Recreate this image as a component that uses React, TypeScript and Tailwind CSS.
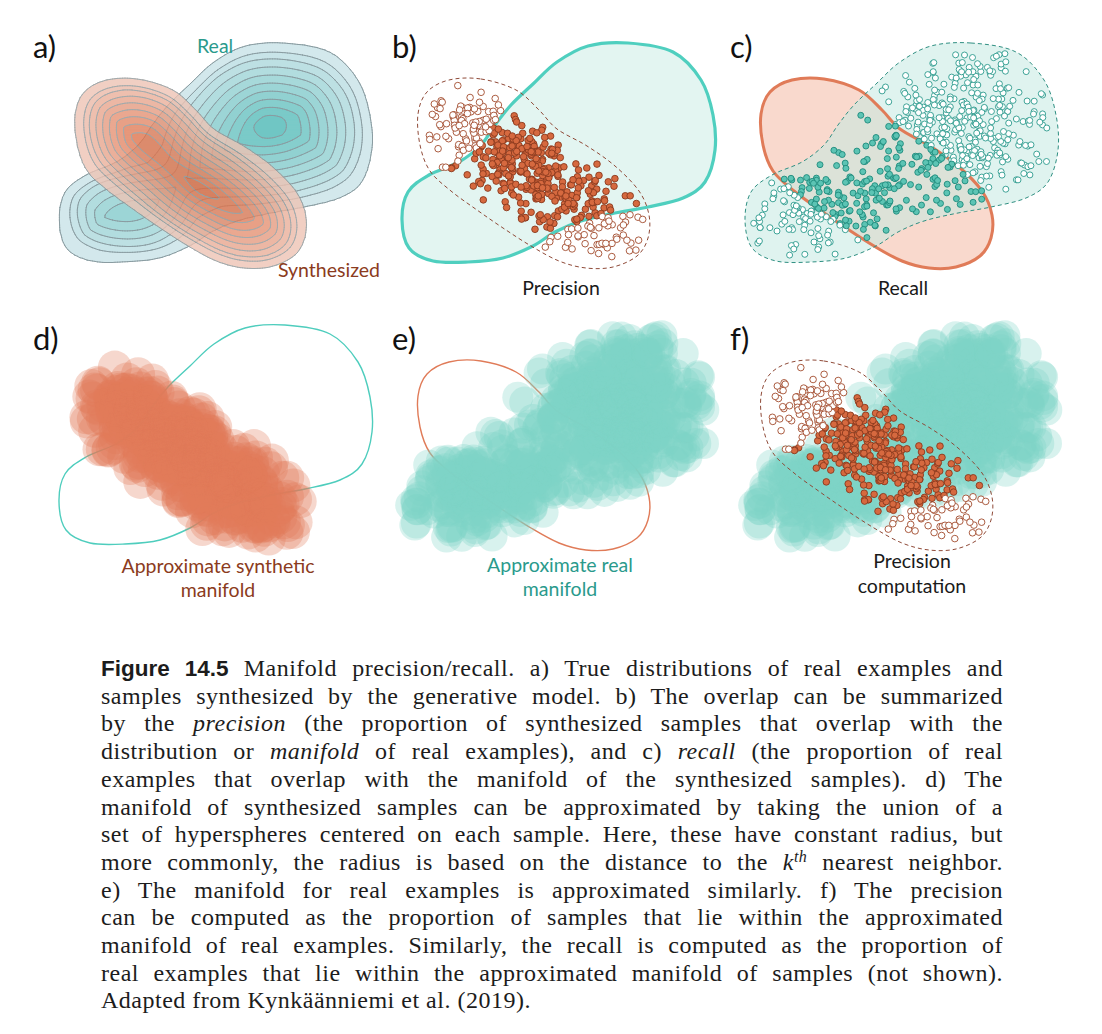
import React from 'react';

type Pt = [number, number];
type Comp = { cx: number; cy: number; sx: number; sy: number; rot: number; w: number };

// grid offsets between the panels (all shapes are defined in panel a coordinates)
const DX = 343;
const DY = 282;

const R_PTS: Pt[] = [
  [285, 43], [330, 52], [358, 80], [370, 115], [372, 150], [362, 182], [340, 198], [305, 207],
  [272, 213], [238, 221], [212, 232], [190, 246], [160, 258], [125, 262], [90, 261], [66, 248],
  [59, 220], [65, 192], [86, 175], [116, 162], [138, 145], [152, 125], [168, 105], [190, 84],
  [214, 62], [245, 46],
];

const S_PTS: Pt[] = [
  [138, 79], [173, 90], [196, 110], [214, 129], [244, 146], [272, 166], [296, 191], [306, 215],
  [305, 238], [294, 256], [270, 267], [243, 268], [216, 261], [188, 246], [160, 228], [134, 210],
  [108, 191], [87, 171], [77, 145], [75, 114], [84, 92], [106, 80],
];

const deg = Math.PI / 180;
const AX = 36 * deg;
const along = (t: number, p = 0): Pt => [190 + t * Math.cos(AX) - p * Math.sin(AX), 175 + t * Math.sin(AX) + p * Math.cos(AX)];

const ORANGE: Comp[] = [
  { cx: along(-60, -4)[0], cy: along(-60, -4)[1], sx: 30, sy: 24, rot: AX, w: 0.9 },
  { cx: along(8, 6)[0], cy: along(8, 6)[1], sx: 32, sy: 24, rot: AX, w: 1.0 },
  { cx: along(64, 4)[0], cy: along(64, 4)[1], sx: 30, sy: 22, rot: AX, w: 0.7 },
];
const TEAL: Comp[] = [
  { cx: 270, cy: 126, sx: 42, sy: 34, rot: 0, w: 1 },
  { cx: 126, cy: 212, sx: 30, sy: 22, rot: 12 * deg, w: 0.5 },
];

// sampling mixtures (w = probability)
const SYNTH_SAMPLER: Comp[] = [
  { cx: along(-62)[0], cy: along(-62)[1], sx: 34, sy: 24, rot: AX, w: 0.34 },
  { cx: along(0)[0], cy: along(0)[1], sx: 34, sy: 24, rot: AX, w: 0.4 },
  { cx: along(62)[0], cy: along(62)[1], sx: 34, sy: 24, rot: AX, w: 0.26 },
];
const REAL_SAMPLER: Comp[] = [
  { cx: 280, cy: 122, sx: 48, sy: 40, rot: 0, w: 0.56 },
  { cx: 118, cy: 214, sx: 38, sy: 27, rot: 12 * deg, w: 0.22 },
  { cx: 200, cy: 185, sx: 50, sy: 26, rot: -15 * deg, w: 0.22 },
];

const f1 = (n: number) => n.toFixed(1);

const mixture = (comps: Comp[]) => (x: number, y: number) => {
  let s = 0;
  for (const c of comps) {
    const dx = x - c.cx;
    const dy = y - c.cy;
    const u = (dx * Math.cos(c.rot) + dy * Math.sin(c.rot)) / c.sx;
    const v = (-dx * Math.sin(c.rot) + dy * Math.cos(c.rot)) / c.sy;
    s += c.w * Math.exp(-0.5 * (u * u + v * v));
  }
  return s;
};

function splinePath(pts: Pt[]): string {
  const n = pts.length;
  let d = `M${pts[0][0]},${pts[0][1]}`;
  for (let i = 0; i < n; i++) {
    const p0 = pts[(i - 1 + n) % n];
    const p1 = pts[i];
    const p2 = pts[(i + 1) % n];
    const p3 = pts[(i + 2) % n];
    const c1x = p1[0] + (p2[0] - p0[0]) / 6;
    const c1y = p1[1] + (p2[1] - p0[1]) / 6;
    const c2x = p2[0] - (p3[0] - p1[0]) / 6;
    const c2y = p2[1] - (p3[1] - p1[1]) / 6;
    d += ` C${f1(c1x)},${f1(c1y)} ${f1(c2x)},${f1(c2y)} ${p2[0]},${p2[1]}`;
  }
  return d + 'Z';
}

function splinePoly(pts: Pt[], steps = 8): Pt[] {
  const n = pts.length;
  const out: Pt[] = [];
  for (let i = 0; i < n; i++) {
    const p0 = pts[(i - 1 + n) % n];
    const p1 = pts[i];
    const p2 = pts[(i + 1) % n];
    const p3 = pts[(i + 2) % n];
    const c1: Pt = [p1[0] + (p2[0] - p0[0]) / 6, p1[1] + (p2[1] - p0[1]) / 6];
    const c2: Pt = [p2[0] - (p3[0] - p1[0]) / 6, p2[1] - (p3[1] - p1[1]) / 6];
    for (let s = 0; s < steps; s++) {
      const t = s / steps;
      const a = (1 - t) ** 3, b = 3 * (1 - t) ** 2 * t, c = 3 * (1 - t) * t * t, d = t ** 3;
      out.push([a * p1[0] + b * c1[0] + c * c2[0] + d * p2[0], a * p1[1] + b * c1[1] + c * c2[1] + d * p2[1]]);
    }
  }
  return out;
}

function inPoly(poly: Pt[], x: number, y: number) {
  let inside = false;
  for (let i = 0, j = poly.length - 1; i < poly.length; j = i++) {
    const [xi, yi] = poly[i];
    const [xj, yj] = poly[j];
    if (yi > y !== yj > y && x < ((xj - xi) * (y - yi)) / (yj - yi) + xi) inside = !inside;
  }
  return inside;
}

function distPoly(poly: Pt[], x: number, y: number) {
  let best = Infinity;
  for (let i = 0, j = poly.length - 1; i < poly.length; j = i++) {
    const [ax, ay] = poly[j];
    const [bx, by] = poly[i];
    const vx = bx - ax, vy = by - ay;
    const t = Math.max(0, Math.min(1, ((x - ax) * vx + (y - ay) * vy) / (vx * vx + vy * vy)));
    const d = Math.hypot(x - ax - t * vx, y - ay - t * vy);
    if (d < best) best = d;
  }
  return best;
}

// level field: evenly spaced rings that start on the traced outline and close in on the modes
function shapedField(poly: Pt[], comps: Comp[], depth: number) {
  const m = mixture(comps);
  const peak = Math.max(...comps.map((c) => m(c.cx, c.cy)));
  return (x: number, y: number) => {
    const inside = inPoly(poly, x, y);
    const dist = distPoly(poly, x, y);
    if (!inside) return -dist / depth;
    const phi = Math.min(dist / depth, 1);
    const q = Math.min(1, Math.max(m(x, y) / peak, 1e-9));
    const g = Math.max(0, 1 - Math.sqrt(Math.max(0, -2 * Math.log(q))) / 2.6);
    return 0.5 * phi + 0.5 * g * Math.min(1, dist / 12);
  };
}

function rng(seed: number) {
  return () => {
    seed |= 0;
    seed = (seed + 0x6d2b79f5) | 0;
    let t = Math.imul(seed ^ (seed >>> 15), 1 | seed);
    t = (t + Math.imul(t ^ (t >>> 7), 61 | t)) ^ t;
    return ((t ^ (t >>> 14)) >>> 0) / 4294967296;
  };
}

function sample(comps: Comp[], n: number, poly: Pt[], margin: number, seed: number): Pt[] {
  const r = rng(seed);
  const g = () => Math.sqrt(-2 * Math.log(1 - r())) * Math.cos(2 * Math.PI * r());
  const total = comps.reduce((a, c) => a + c.w, 0);
  const out: Pt[] = [];
  let tries = 0;
  while (out.length < n && tries < n * 40) {
    tries++;
    let pick = r() * total;
    let k = 0;
    while (k < comps.length - 1 && pick > comps[k].w) {
      pick -= comps[k].w;
      k++;
    }
    const c = comps[k];
    const u = g() * c.sx;
    const v = g() * c.sy;
    const x = c.cx + u * Math.cos(c.rot) - v * Math.sin(c.rot);
    const y = c.cy + u * Math.sin(c.rot) + v * Math.cos(c.rot);
    if (inPoly(poly, x, y) && distPoly(poly, x, y) > margin) out.push([x, y]);
  }
  return out;
}

function contours(f: (x: number, y: number) => number, levels: number[], x0: number, y0: number, x1: number, y1: number, h: number) {
  const nx = Math.floor((x1 - x0) / h) + 1;
  const ny = Math.floor((y1 - y0) / h) + 1;
  const v = new Float64Array(nx * ny);
  let mx = 0;
  for (let j = 0; j < ny; j++)
    for (let i = 0; i < nx; i++) {
      const raw = f(x0 + i * h, y0 + j * h);
      const val = Number.isFinite(raw) ? raw : 0;
      v[j * nx + i] = val;
      if (val > mx) mx = val;
    }
  for (let k = 0; k < v.length; k++) v[k] /= mx;

  return levels.map((L) => {
    let fill = '';
    let line = '';
    for (let j = 0; j < ny - 1; j++) {
      const yA = y0 + j * h;
      const yB = yA + h;
      let run = -1;
      const flush = (end: number) => {
        if (run >= 0) {
          fill += `M${f1(x0 + run * h)} ${f1(yA)}H${f1(x0 + end * h)}V${f1(yB)}H${f1(x0 + run * h)}Z`;
          run = -1;
        }
      };
      for (let i = 0; i < nx - 1; i++) {
        const a = v[j * nx + i], b = v[j * nx + i + 1], c = v[(j + 1) * nx + i + 1], d = v[(j + 1) * nx + i];
        if (a >= L && b >= L && c >= L && d >= L) {
          if (run < 0) run = i;
          continue;
        }
        flush(i);
        if (a < L && b < L && c < L && d < L) continue;
        const xA = x0 + i * h;
        const xB = xA + h;
        const cs: [number, number, number][] = [[xA, yA, a], [xB, yA, b], [xB, yB, c], [xA, yB, d]];
        const poly: string[] = [];
        const cr: { x: number; y: number; exit: boolean }[] = [];
        for (let k = 0; k < 4; k++) {
          const p = cs[k];
          const q = cs[(k + 1) % 4];
          const pin = p[2] >= L;
          const qin = q[2] >= L;
          if (pin) poly.push(`${f1(p[0])} ${f1(p[1])}`);
          if (pin !== qin) {
            const t = (L - p[2]) / (q[2] - p[2]);
            const x = p[0] + t * (q[0] - p[0]);
            const y = p[1] + t * (q[1] - p[1]);
            poly.push(`${f1(x)} ${f1(y)}`);
            cr.push({ x, y, exit: pin });
          }
        }
        fill += 'M' + poly.join('L') + 'Z';
        if (cr.length >= 2) {
          const s = Math.max(0, cr.findIndex((q) => q.exit));
          const rot = cr.slice(s).concat(cr.slice(0, s));
          for (let m = 0; m + 1 < rot.length; m += 2)
            line += `M${f1(rot[m].x)} ${f1(rot[m].y)}L${f1(rot[m + 1].x)} ${f1(rot[m + 1].y)}`;
        }
      }
      flush(nx - 1);
    }
    return { fill, line };
  });
}

function hex(c: string): number[] {
  return [1, 3, 5].map((i) => parseInt(c.slice(i, i + 2), 16));
}
function mixColor(a: string, b: string, t: number) {
  const A = hex(a), B = hex(b);
  return `rgb(${A.map((x, i) => Math.round(x + (B[i] - x) * t)).join(',')})`;
}

const LEVELS = [0.0, 0.13, 0.23, 0.33, 0.43, 0.53, 0.63, 0.73, 0.83, 0.93];

const DATA = (() => {
  const rPoly = splinePoly(R_PTS);
  const sPoly = splinePoly(S_PTS);
  const synth = sample(SYNTH_SAMPLER, 470, sPoly, 5, 7);
  const real = sample(REAL_SAMPLER, 600, rPoly, 5, 21);
  return {
    rPath: splinePath(R_PTS),
    sPath: splinePath(S_PTS),
    synth: synth.map(([x, y]) => ({ x, y, hit: inPoly(rPoly, x, y) })),
    real: real.map(([x, y]) => ({ x, y, hit: inPoly(sPoly, x, y) })),
    teal: contours(shapedField(splinePoly(R_PTS, 5), TEAL, 75), LEVELS, 50, 35, 382, 272, 2.5),
    orange: contours(shapedField(splinePoly(S_PTS, 5), ORANGE, 60), LEVELS, 65, 70, 316, 278, 2.5),
  };
})();

const LABEL_FONT = 'Lato, "Open Sans", sans-serif';
const TEAL_TEXT = '#2a9a8c';
const BROWN_TEXT = '#8b3b20';

function Panel({ x, y, w, h, children }: { x: number; y: number; w: number; h: number; children: React.ReactNode }) {
  return (
    <svg width={w} height={h} viewBox={`${x} ${y} ${w} ${h}`} className="block shrink-0 overflow-visible">
      {children}
    </svg>
  );
}

function Letter({ x, y, t }: { x: number; y: number; t: string }) {
  return (
    <text x={x} y={y} fontFamily={LABEL_FONT} fontSize={31} fill="#111">
      {t}
    </text>
  );
}

function Label({ x, y, t, color = '#1a1a1a', anchor = 'middle' }: { x: number; y: number; t: string; color?: string; anchor?: 'middle' | 'start' }) {
  return (
    <text x={x} y={y} fontFamily={LABEL_FONT} fontSize={19.5} fill={color} textAnchor={anchor}>
      {t}
    </text>
  );
}

function SynthDots({ dx, dy }: { dx: number; dy: number }) {
  return (
    <g transform={`translate(${dx},${dy})`}>
      {DATA.synth.map((p, i) => (
        <circle
          key={i}
          cx={f1(p.x)}
          cy={f1(p.y)}
          r={3.3}
          fill={p.hit ? '#d6693f' : '#ffffff'}
          stroke={p.hit ? '#8a3a1e' : '#a24b2d'}
          strokeWidth={0.9}
        />
      ))}
    </g>
  );
}

function Blobs({ pts, dx, dy, color, r }: { pts: { x: number; y: number }[]; dx: number; dy: number; color: string; r: number }) {
  return (
    <g transform={`translate(${dx},${dy})`} fill={color} fillOpacity={0.3}>
      {pts.map((p, i) => (
        <circle key={i} cx={f1(p.x)} cy={f1(p.y)} r={r} />
      ))}
    </g>
  );
}

function PanelA() {
  const n = LEVELS.length - 1;
  return (
    <Panel x={0} y={0} w={362} h={310}>
      <g>
        {DATA.teal.map((c, k) => {
          const col = mixColor('#d3e8ec', '#70c6c4', k / n);
          return <path key={k} d={c.fill} fill={col} stroke={col} strokeWidth={0.5} />;
        })}
        {DATA.teal.map((c, k) => (
          <path key={k} d={c.line} fill="none" stroke="#8a9ca1" strokeWidth={1} strokeLinecap="round" />
        ))}
      </g>
      <g opacity={0.8}>
        {DATA.orange.map((c, k) => {
          const col = mixColor('#eec4b5', '#dd6b41', k / n);
          return <path key={k} d={c.fill} fill={col} stroke={col} strokeWidth={0.5} />;
        })}
        {DATA.orange.map((c, k) => (
          <path key={k} d={c.line} fill="none" stroke="#8a9699" strokeWidth={1} strokeLinecap="round" />
        ))}
      </g>
      <Letter x={33} y={58} t="a)" />
      <Label x={197} y={53} t="Real" color={TEAL_TEXT} anchor="start" />
      <Label x={278} y={277} t="Synthesized" color={BROWN_TEXT} anchor="start" />
    </Panel>
  );
}

function PanelB() {
  return (
    <Panel x={362} y={0} w={338} h={310}>
      <g transform={`translate(${DX},0)`}>
        <path d={DATA.rPath} fill="#e3f5f1" stroke="#4fcfbf" strokeWidth={3.2} />
        <path d={DATA.sPath} fill="none" stroke="#8f4a38" strokeWidth={1} strokeDasharray="4 3" />
      </g>
      <SynthDots dx={DX} dy={0} />
      <Letter x={392} y={58} t="b)" />
      <Label x={561} y={295} t="Precision" />
    </Panel>
  );
}

function PanelC() {
  return (
    <Panel x={700} y={0} w={402} h={310}>
      <g transform={`translate(${2 * DX},0)`}>
        <path d={DATA.sPath} fill="#f9d9cd" />
        <path d={DATA.rPath} fill="#c4eae2" fillOpacity={0.55} />
        <path d={DATA.sPath} fill="none" stroke="#e07b58" strokeWidth={3} />
        <path d={DATA.rPath} fill="none" stroke="#2f8f82" strokeWidth={1} strokeDasharray="4 3" />
        {DATA.real.map((p, i) => (
          <circle
            key={i}
            cx={f1(p.x)}
            cy={f1(p.y)}
            r={3}
            fill={p.hit ? '#5cc4b4' : '#ffffff'}
            stroke={p.hit ? '#1e8a7c' : '#2a9a8c'}
            strokeWidth={0.9}
          />
        ))}
      </g>
      <Letter x={730} y={58} t="c)" />
      <Label x={903} y={295} t="Recall" />
    </Panel>
  );
}

function PanelD() {
  return (
    <Panel x={0} y={310} w={362} h={310}>
      <g transform={`translate(0,${DY})`}>
        <path d={DATA.rPath} fill="none" stroke="#4ecdbd" strokeWidth={1.4} />
      </g>
      <Blobs pts={DATA.synth} dx={0} dy={DY} color="#e27c59" r={17} />
      <Letter x={33} y={350} t="d)" />
      <Label x={218} y={573} t="Approximate synthetic" color={BROWN_TEXT} />
      <Label x={218} y={597} t="manifold" color={BROWN_TEXT} />
    </Panel>
  );
}

function PanelE() {
  return (
    <Panel x={362} y={310} w={338} h={310}>
      <g transform={`translate(${DX},${DY})`}>
        <path d={DATA.sPath} fill="none" stroke="#e07b58" strokeWidth={1.4} />
      </g>
      <Blobs pts={DATA.real} dx={DX} dy={DY} color="#7fd3c6" r={15.5} />
      <Letter x={392} y={350} t="e)" />
      <Label x={560} y={572} t="Approximate real" color={TEAL_TEXT} />
      <Label x={560} y={596} t="manifold" color={TEAL_TEXT} />
    </Panel>
  );
}

function PanelF() {
  return (
    <Panel x={700} y={310} w={402} h={310}>
      <Blobs pts={DATA.real} dx={2 * DX} dy={DY} color="#7fd3c6" r={15.5} />
      <g transform={`translate(${2 * DX},${DY})`}>
        <path d={DATA.sPath} fill="none" stroke="#8f4a38" strokeWidth={1} strokeDasharray="4 3" />
      </g>
      <SynthDots dx={2 * DX} dy={DY} />
      <Letter x={730} y={350} t="f)" />
      <Label x={912} y={568} t="Precision" />
      <Label x={912} y={593} t="computation" />
    </Panel>
  );
}

const CAPTION: React.ReactNode[] = [
  <>
    <span className="font-['Liberation_Sans',sans-serif] font-bold text-[22.5px] tracking-normal">Figure 14.5</span> Manifold precision/recall. a) True distributions of real examples and
  </>,
  <>samples synthesized by the generative model. b) The overlap can be summarized</>,
  <>
    by the <i>precision</i> (the proportion of synthesized samples that overlap with the
  </>,
  <>
    distribution or <i>manifold</i> of real examples), and c) <i>recall</i> (the proportion of real
  </>,
  <>examples that overlap with the manifold of the synthesized samples). d) The</>,
  <>manifold of synthesized samples can be approximated by taking the union of a</>,
  <>set of hyperspheres centered on each sample. Here, these have constant radius, but</>,
  <>
    more commonly, the radius is based on the distance to the <i>k</i>
    <sup className="text-[16px] italic">th</sup> nearest neighbor.
  </>,
  <>e) The manifold for real examples is approximated similarly. f) The precision</>,
  <>can be computed as the proportion of samples that lie within the approximated</>,
  <>manifold of real examples. Similarly, the recall is computed as the proportion of</>,
  <>real examples that lie within the approximated manifold of samples (not shown).</>,
  <>Adapted from Kynkäänniemi et al. (2019).</>,
];

export default function App() {
  return (
    <div className="w-[1102px] h-[1034px] bg-white overflow-hidden">
      <div className="flex flex-col">
        <div className="flex">
          <PanelA />
          <PanelB />
          <PanelC />
        </div>
        <div className="flex">
          <PanelD />
          <PanelE />
          <PanelF />
        </div>
      </div>
      <div className="ml-[101px] mt-[35px] w-[902px] font-['Liberation_Serif',serif] text-[24px] leading-[27.7px] tracking-[0.5px] text-[#1c1c1c]">
        {CAPTION.map((line, i) => (
          <div
            key={i}
            className={i === CAPTION.length - 1 ? 'text-left' : 'text-justify [text-align-last:justify]'}
          >
            {line}
          </div>
        ))}
      </div>
    </div>
  );
}
